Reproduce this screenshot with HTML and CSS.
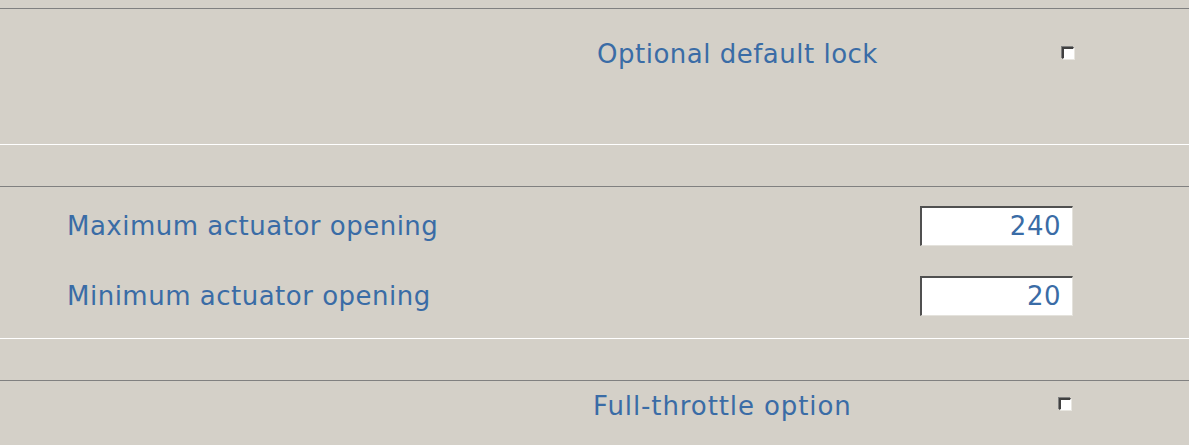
FILE: index.html
```html
<!DOCTYPE html>
<html lang="en">

<head>
    <meta charset="UTF-8">
    <meta name="viewport" content="width=device-width, initial-scale=1.0">
    <title>Actuator settings</title>
    <link rel="stylesheet" href="styles.css">
</head>

<body>
    <div class="panel">
        <div class="group group-lock">
            <div class="row row-check">
                <span class="label">Optional default lock</span>
                <span class="check"></span>
            </div>
        </div>

        <div class="group group-actuator">
            <div class="row row-field">
                <span class="label">Maximum actuator opening</span>
                <span class="field">240</span>
            </div>
            <div class="row row-field">
                <span class="label">Minimum actuator opening</span>
                <span class="field">20</span>
            </div>
        </div>

        <div class="group group-throttle">
            <div class="row row-check">
                <span class="label">Full-throttle option</span>
                <span class="check"></span>
            </div>
        </div>
    </div>
</body>

</html>
```

FILE: styles.css
```css
html,
body {
    height: 100%;
    margin: 0;
}

body {
    background: #d4d0c8;
    font-family: "DejaVu Sans", sans-serif;
    overflow: hidden;
}

.panel {
    padding-top: 8px;
    display: flex;
    flex-direction: column;
    gap: 41px;
}

.group {
    border-top: 1px solid #808080;
    border-bottom: 1px solid #ffffff;
    display: flex;
    flex-direction: column;
}

.group-lock {
    height: 110px;
    padding-top: 25px;
}

.group-actuator {
    padding: 19px 0 22px;
    gap: 30px;
}

.group-throttle {
    padding-top: 5px;
    border-bottom: none;
}

.row {
    display: flex;
    align-items: center;
    height: 40px;
}

.label {
    color: #3a6ca6;
    font-size: 26px;
    letter-spacing: 0.5px;
    white-space: nowrap;
}

.group-lock .row-check {
    padding-left: 597px;
}

.group-lock .label {
    width: 465px;
}

.group-throttle .row-check {
    padding-left: 593px;
}

.group-throttle .label {
    width: 466px;
    letter-spacing: 0.9px;
}

/* sunken checkbox, unchecked */
.check {
    width: 9px;
    height: 9px;
    background: #ffffff;
    border-style: solid;
    border-width: 2px 1px 1px 2px;
    border-color: #404040 #ffffff #ffffff #404040;
    box-shadow: -1px -1px 0 #808080, 1px 1px 0 #e8e6e0;
    margin-top: -2px;
}

.group-throttle .check {
    margin-top: -4px;
}

.row-field {
    padding-left: 67px;
}

.row-field .label {
    flex: 1;
}

.field {
    width: 153px;
    height: 40px;
    margin-right: 116px;
    box-sizing: border-box;
    background: #ffffff;
    border-style: solid;
    border-width: 2px 1px 1px 2px;
    border-color: #505050 #e4e2dc #e4e2dc #505050;
    color: #3a6ca6;
    font-size: 26px;
    letter-spacing: 0.5px;
    text-align: right;
    padding-right: 11px;
    line-height: 37px;
}
```
